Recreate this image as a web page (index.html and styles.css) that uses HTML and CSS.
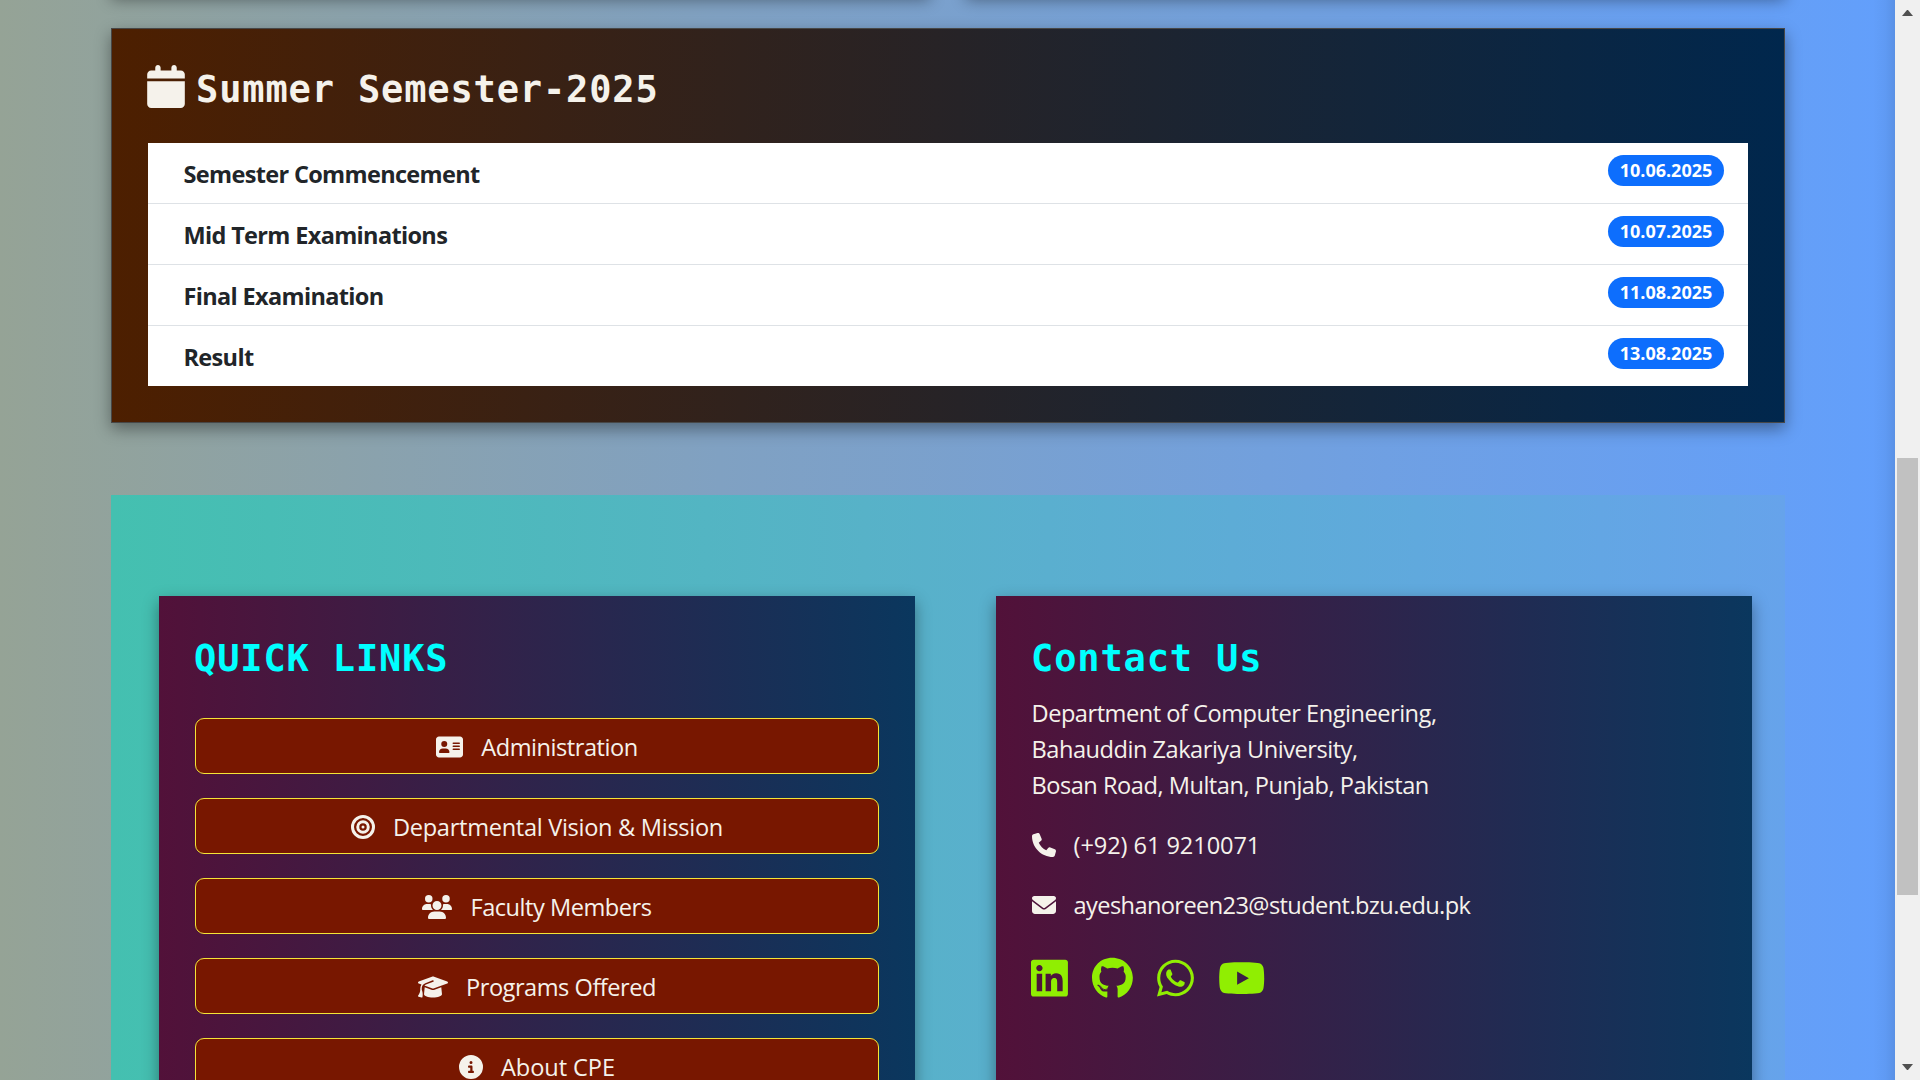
FILE: index.html
```html
<!DOCTYPE html>
<html lang="en">
<head>
<meta charset="utf-8">
<title>Department of Computer Engineering</title>
<link rel="stylesheet" href="styles.css">
</head>
<body>
<div class="window">
  <main class="page">
    <div class="previous-row"><div class="previous-card"></div><div class="previous-card"></div></div>

    <section class="calendar-card">
      <h2 class="calendar-title">
        <svg class="calendar-icon" viewBox="0 0 448 512"><path d="M96 32V64H48C21.5 64 0 85.5 0 112v48H448V112c0-26.5-21.5-48-48-48H352V32c0-17.7-14.3-32-32-32s-32 14.3-32 32V64H160V32c0-17.7-14.3-32-32-32S96 14.3 96 32zM448 192H0V464c0 26.5 21.5 48 48 48H400c26.5 0 48-21.5 48-48V192z"/></svg>
        <span>Summer Semester-2025</span>
      </h2>
      <ul class="dates">
        <li class="date-row"><span class="date-name">Semester Commencement</span><span class="badge">10.06.2025</span></li>
        <li class="date-row"><span class="date-name">Mid Term Examinations</span><span class="badge">10.07.2025</span></li>
        <li class="date-row"><span class="date-name">Final Examination</span><span class="badge">11.08.2025</span></li>
        <li class="date-row"><span class="date-name">Result</span><span class="badge">13.08.2025</span></li>
      </ul>
    </section>

    <footer class="footer">
      <section class="footer-card">
        <h2 class="footer-title">QUICK LINKS</h2>
        <nav class="links">
          <a class="link"><svg class="icon w576" viewBox="0 0 576 512"><path d="M64 32C28.7 32 0 60.7 0 96V416c0 35.3 28.7 64 64 64H512c35.3 0 64-28.7 64-64V96c0-35.3-28.7-64-64-64H64zm80 256h64c44.2 0 80 35.8 80 80c0 8.8-7.2 16-16 16H80c-8.8 0-16-7.2-16-16c0-44.2 35.8-80 80-80zm-32-96a64 64 0 1 1 128 0 64 64 0 1 1 -128 0zm256-32H496c8.8 0 16 7.2 16 16s-7.2 16-16 16H368c-8.8 0-16-7.2-16-16s7.2-16 16-16zm0 64H496c8.8 0 16 7.2 16 16s-7.2 16-16 16H368c-8.8 0-16-7.2-16-16s7.2-16 16-16zm0 64H496c8.8 0 16 7.2 16 16s-7.2 16-16 16H368c-8.8 0-16-7.2-16-16s7.2-16 16-16z"/></svg><span>Administration</span></a>
          <a class="link spaced"><svg class="icon w512" viewBox="0 0 512 512"><path d="M448 256A192 192 0 1 0 64 256a192 192 0 1 0 384 0zM0 256a256 256 0 1 1 512 0A256 256 0 1 1 0 256zm256 80a80 80 0 1 0 0-160 80 80 0 1 0 0 160zm0-224a144 144 0 1 1 0 288 144 144 0 1 1 0-288zM224 256a32 32 0 1 1 64 0 32 32 0 1 1 -64 0z"/></svg><span>Departmental Vision &amp; Mission</span></a>
          <a class="link"><svg class="icon w640" viewBox="0 0 640 512"><path d="M144 0a80 80 0 1 1 0 160A80 80 0 1 1 144 0zM512 0a80 80 0 1 1 0 160A80 80 0 1 1 512 0zM0 298.7C0 239.8 47.8 192 106.7 192h42.7c15.9 0 31 3.5 44.6 9.7c-1.3 7.2-1.9 14.7-1.9 22.3c0 38.2 16.8 72.5 43.3 96c-.2 0-.4 0-.7 0H21.3C9.6 320 0 310.4 0 298.7zM405.3 320c-.2 0-.4 0-.7 0c26.6-23.5 43.3-57.8 43.3-96c0-7.6-.7-15-1.9-22.3c13.6-6.3 28.7-9.7 44.6-9.7h42.7C592.2 192 640 239.8 640 298.7c0 11.8-9.6 21.3-21.3 21.3H405.3zM224 224a96 96 0 1 1 192 0 96 96 0 1 1 -192 0zM128 485.3C128 411.7 187.7 352 261.3 352H378.7C452.3 352 512 411.7 512 485.3c0 14.7-11.9 26.7-26.7 26.7H154.7c-14.7 0-26.7-11.9-26.7-26.7z"/></svg><span>Faculty Members</span></a>
          <a class="link"><svg class="icon w640" viewBox="0 0 640 512"><path d="M320 32c-8.1 0-16.1 1.4-23.7 4.1L15.8 137.4C6.3 140.9 0 149.9 0 160s6.3 19.1 15.8 22.6l57.9 20.9C57.3 229.3 48 259.8 48 291.9v28.1c0 28.4-10.8 57.7-22.3 80.8c-6.5 13-13.9 25.8-22.5 37.6C0 442.7-.9 448.3 .9 453.4s6 8.9 11.2 10.2l64 16c4.2 1.1 8.7 .3 12.4-2s6.3-6.1 7.1-10.4c8.6-42.8 4.3-81.2-2.1-108.7C90.3 344.3 86 329.8 80 316.5V291.9c0-30.2 10.2-58.7 27.9-81.5c12.9-15.5 29.6-28 49.2-35.7l157-61.7c8.2-3.2 17.5 .8 20.7 9s-.8 17.5-9 20.7l-157 61.7c-12.4 4.9-23.3 12.4-32.2 21.6l159.6 57.6c7.6 2.7 15.6 4.1 23.7 4.1s16.1-1.4 23.7-4.1L624.2 182.6c9.5-3.4 15.8-12.5 15.8-22.6s-6.3-19.1-15.8-22.6L343.7 36.1C336.1 33.4 328.1 32 320 32zM128 408c0 35.3 86 72 192 72s192-36.7 192-72L496.7 262.6 354.5 314c-11.1 4-22.8 6-34.5 6s-23.5-2-34.5-6L143.3 262.6 128 408z"/></svg><span>Programs Offered</span></a>
          <a class="link wide"><svg class="icon w512" viewBox="0 0 512 512"><path d="M256 512A256 256 0 1 0 256 0a256 256 0 1 0 0 512zM216 336h24V272H216c-13.3 0-24-10.7-24-24s10.7-24 24-24h48c13.3 0 24 10.7 24 24v88h8c13.3 0 24 10.7 24 24s-10.7 24-24 24H216c-13.3 0-24-10.7-24-24s10.7-24 24-24zm40-208a32 32 0 1 1 0 64 32 32 0 1 1 0-64z"/></svg><span>About CPE</span></a>
        </nav>
      </section>

      <section class="footer-card">
        <h2 class="footer-title">Contact Us</h2>
        <p class="contact-line">Department of Computer Engineering,<br>Bahauddin Zakariya University,<br>Bosan Road, Multan, Punjab, Pakistan</p>
        <p class="contact-item wide"><svg class="icon w512" viewBox="0 0 512 512"><path d="M164.9 24.6c-7.7-18.6-28-28.5-47.4-23.2l-88 24C12.1 30.2 0 46 0 64C0 311.4 200.6 512 448 512c18 0 33.8-12.1 38.6-29.5l24-88c5.3-19.4-4.6-39.7-23.2-47.4l-96-40c-16.3-6.8-35.2-2.1-46.3 11.6L304.7 368C234.3 334.7 177.3 277.7 144 207.3L193.3 167c13.7-11.2 18.4-30 11.6-46.3l-40-96z"/></svg><span>(+92) 61 9210071</span></p>
        <p class="contact-item tight"><svg class="icon w512" viewBox="0 0 512 512"><path d="M48 64C21.5 64 0 85.5 0 112c0 15.1 7.1 29.3 19.2 38.4L236.8 313.6c11.4 8.5 27 8.5 38.4 0L492.8 150.4c12.1-9.1 19.2-23.3 19.2-38.4c0-26.5-21.5-48-48-48H48zM0 176V384c0 35.3 28.7 64 64 64H448c35.3 0 64-28.7 64-64V176L294.4 339.2c-22.8 17.1-54 17.1-76.8 0L0 176z"/></svg><span>ayeshanoreen23@student.bzu.edu.pk</span></p>
        <div class="social">
          <svg class="social-icon" viewBox="0 0 448 512"><path d="M416 32H31.9C14.3 32 0 46.5 0 64.3v383.4C0 465.5 14.3 480 31.9 480H416c17.6 0 32-14.5 32-32.3V64.3c0-17.8-14.4-32.3-32-32.3zM135.4 416H69V202.2h66.5V416zm-33.2-243c-21.3 0-38.5-17.3-38.5-38.5S80.9 96 102.2 96c21.2 0 38.5 17.3 38.5 38.5 0 21.3-17.2 38.5-38.5 38.5zm282.1 243h-66.4V312c0-24.8-.5-56.7-34.5-56.7-34.6 0-39.9 27-39.9 54.9V416h-66.4V202.2h63.7v29.2h.9c8.9-16.8 30.6-34.5 62.9-34.5 67.2 0 79.7 44.3 79.7 101.9V416z"/></svg>
          <svg class="social-icon" viewBox="0 0 496 512"><path d="M165.9 397.4c0 2-2.3 3.6-5.2 3.6-3.3.3-5.6-1.3-5.6-3.6 0-2 2.3-3.6 5.2-3.6 3-.3 5.6 1.3 5.6 3.6zm-31.1-4.5c-.7 2 1.3 4.3 4.3 4.9 2.6 1 5.6 0 6.2-2s-1.3-4.3-4.3-5.2c-2.6-.7-5.5.3-6.2 2.3zm44.2-1.7c-2.9.7-4.9 2.6-4.6 4.9.3 2 2.9 3.3 5.9 2.6 2.9-.7 4.9-2.6 4.6-4.6-.3-1.9-3-3.2-5.9-2.9zM244.8 8C106.1 8 0 113.3 0 252c0 110.9 69.8 205.8 169.5 239.2 12.8 2.3 17.3-5.6 17.3-12.1 0-6.2-.3-40.4-.3-61.4 0 0-70 15-84.7-29.8 0 0-11.4-29.1-27.8-36.6 0 0-22.9-15.7 1.6-15.4 0 0 24.9 2 38.6 25.8 21.9 38.6 58.6 27.5 72.9 20.9 2.3-16 8.8-27.1 16-33.7-55.9-6.2-112.3-14.3-112.3-110.5 0-27.5 7.6-41.3 23.6-58.9-2.6-6.5-11.1-33.3 2.6-67.9 20.9-6.5 69 27 69 27 20-5.6 41.5-8.5 62.8-8.5s42.8 2.9 62.8 8.5c0 0 48.1-33.6 69-27 13.7 34.7 5.2 61.4 2.6 67.9 16 17.7 25.8 31.5 25.8 58.9 0 96.5-58.9 104.2-114.8 110.5 9.2 7.9 17 22.9 17 46.4 0 33.7-.3 75.4-.3 83.6 0 6.5 4.6 14.4 17.3 12.1C428.2 457.8 496 362.9 496 252 496 113.3 383.5 8 244.8 8zM97.2 352.9c-1.3 1-1 3.3.7 5.2 1.6 1.6 3.9 2.3 5.2 1 1.3-1 1-3.3-.7-5.2-1.6-1.6-3.9-2.3-5.2-1zm-10.8-8.1c-.7 1.3.3 2.9 2.3 3.9 1.6 1 3.6.7 4.3-.7.7-1.3-.3-2.9-2.3-3.9-2-.6-3.6-.3-4.3.7zm32.4 35.6c-1.6 1.3-1 4.3 1.3 6.2 2.3 2.3 5.2 2.6 6.5 1 1.3-1.3.7-4.3-1.3-6.2-2.2-2.3-5.2-2.6-6.5-1zm-11.4-14.7c-1.6 1-1.6 3.6 0 5.9 1.6 2.3 4.3 3.3 5.6 2.3 1.6-1.3 1.6-3.9 0-6.2-1.4-2.3-4-3.3-5.6-2z"/></svg>
          <svg class="social-icon" viewBox="0 0 448 512"><path d="M380.9 97.1C339 55.1 283.2 32 223.9 32c-122.4 0-222 99.6-222 222 0 39.1 10.2 77.3 29.6 111L0 480l117.7-30.9c32.4 17.7 68.9 27 106.1 27h.1c122.3 0 224.1-99.6 224.1-222 0-59.3-25.2-115-67.1-157zm-157 341.6c-33.2 0-65.7-8.9-94-25.7l-6.7-4-69.8 18.3L72 359.2l-4.4-7c-18.5-29.4-28.2-63.3-28.2-98.2 0-101.7 82.8-184.5 184.6-184.5 49.3 0 95.6 19.2 130.4 54.1 34.8 34.9 56.2 81.2 56.1 130.5 0 101.8-84.9 184.6-186.6 184.6zm101.2-138.2c-5.5-2.8-32.8-16.2-37.9-18-5.1-1.9-8.8-2.8-12.5 2.8-3.7 5.6-14.3 18-17.6 21.8-3.2 3.7-6.5 4.2-12 1.4-32.6-16.3-54-29.1-75.5-66-5.7-9.8 5.7-9.1 16.3-30.3 1.8-3.7.9-6.9-.5-9.7-1.4-2.8-12.5-30.1-17.1-41.2-4.5-10.8-9.1-9.3-12.5-9.5-3.2-.2-6.9-.2-10.6-.2-3.7 0-9.7 1.4-14.8 6.9-5.1 5.6-19.4 19-19.4 46.3 0 27.3 19.9 53.7 22.6 57.4 2.8 3.7 39.1 59.7 94.8 83.8 35.2 15.2 49 16.5 66.6 13.9 10.7-1.6 32.8-13.4 37.4-26.4 4.6-13 4.6-24.1 3.2-26.4-1.3-2.5-5-3.9-10.5-6.6z"/></svg>
          <svg class="social-icon" viewBox="0 0 576 512"><path d="M549.655 124.083c-6.281-23.65-24.787-42.276-48.284-48.597C458.781 64 288 64 288 64S117.22 64 74.629 75.486c-23.497 6.322-42.003 24.947-48.284 48.597-11.412 42.867-11.412 132.305-11.412 132.305s0 89.438 11.412 132.305c6.281 23.65 24.787 41.5 48.284 47.821C117.22 448 288 448 288 448s170.78 0 213.371-11.486c23.497-6.321 42.003-24.171 48.284-47.821 11.412-42.867 11.412-132.305 11.412-132.305s0-89.438-11.412-132.305zm-317.51 213.508V175.185l142.739 81.205-142.739 81.201z"/></svg>
        </div>
      </section>
    </footer>
  </main>
  <aside class="scrollbar">
    <svg class="arrow" viewBox="0 0 11 6"><path d="M5 0h1l5 6H0z"/></svg>
    <div class="thumb"></div>
    <svg class="arrow" viewBox="0 0 11 6"><path d="M0 0h11L6 6H5z"/></svg>
  </aside>
</div>
</body>
</html>
```
FILE: styles.css
```css
* { box-sizing: border-box; }
html, body { height: 100%; }
body {
  margin: 0;
  overflow: hidden;
  font-family: "Open Sans", "Noto Sans", sans-serif;
  font-size: 23.6px;
  letter-spacing: -.48px;
  line-height: 36px;
  color: #f5f2eb;
}
h2, p, ul { margin: 0; padding: 0; }
ul { list-style: none; }
svg { display: block; fill: currentColor; flex: none; }

.window { display: flex; height: 1080px; overflow: hidden; }
.page {
  flex: 1;
  height: 1080px;
  padding: 0 110px 0 111px;
  overflow: hidden;
  background:
    linear-gradient(to left, rgba(0, 0, 0, .09), rgba(0, 0, 0, .03) 10px, transparent 22px),
    linear-gradient(to right, #95a396, #80a1c2 38%, #629ffc);
}

.previous-row { display: flex; gap: 36px; height: 28px; }
.previous-card { flex: 1; height: 20px; margin-top: -26px; box-shadow: 0 6px 15px rgba(0, 0, 0, .38); }

.calendar-card {
  height: 395px;
  padding: 36px;
  border: 1px solid #474747;
  background: linear-gradient(to right, #4d1f00, #00274d);
  box-shadow: 0 6px 15px rgba(0, 0, 0, .38);
}
.calendar-title, .footer-title {
  font-family: "DejaVu Sans Mono", monospace;
  font-size: 37px;
  font-weight: 700;
  letter-spacing: .85px;
}
.calendar-title { display: flex; gap: 11px; height: 78px; margin-left: -1px; line-height: 49px; }
.calendar-icon { width: 38px; height: 43px; }

.dates { background: #fff; color: #212529; }
.date-row {
  display: flex;
  justify-content: space-between;
  align-items: flex-start;
  height: 61px;
  padding: 13px 24px 0 35.5px;
  border-bottom: 1px solid #dee2e6;
  font-size: 23.5px;
  font-weight: 700;
  letter-spacing: -.66px;
}
.date-row:last-child { height: 60px; border-bottom: 0; }
.badge {
  margin-top: -1px;
  width: 116px;
  height: 31px;
  border-radius: 16px;
  background: #0d6efd;
  color: #fff;
  font-size: 18px;
  letter-spacing: 0;
  line-height: 31px;
  text-align: center;
}

.footer {
  display: grid;
  grid-template-columns: 756px 756px;
  gap: 81px;
  height: 900px;
  margin-top: 72px;
  padding: 101px 33px 0 48px;
  background: linear-gradient(to right, #44c0b0, #57b2c8 45%, #66a3eb);
}
.footer-card {
  padding: 36px;
  background: linear-gradient(to right, #521139, #0a375e);
  box-shadow: 0 6px 15px rgba(0, 0, 0, .38);
}
.footer-title { margin-left: -1px; padding-top: 3px; line-height: 47px; color: #0ff; }
.links { display: grid; gap: 24px; margin-top: 36px; }
.link {
  display: flex;
  justify-content: center;
  align-items: center;
  gap: 18px;
  height: 56px;
  padding-top: 2px;
  border: 1px solid #f4e536;
  border-radius: 9px;
  background: #781700;
}
.spaced { letter-spacing: -.3px; }
.wide { letter-spacing: -.08px; }
.tight { letter-spacing: -.6px; }
.icon { height: 24px; }
.w512 { width: 24px; }
.w576 { width: 27px; }
.w640 { width: 30px; }

.contact-line { margin: 13px 0 0 -.5px; }
.contact-item { display: flex; align-items: center; gap: 18px; margin: 24px 0 0 -.5px; }
.social { display: flex; align-items: center; gap: 24px; height: 63px; margin: 24px 0 0 -.7px; color: #90ee02; }
.social-icon { height: 42.2px; }

.scrollbar {
  display: flex;
  flex-direction: column;
  align-items: center;
  width: 25px;
  height: 1080px;
  padding: 10px 2px;
  background: #f0f0f0;
  color: #505050;
}
.arrow { width: 11px; height: 6px; }
.thumb { width: 21px; height: 437px; margin: 442px 0 auto; background: #c1c1c1; }
```
